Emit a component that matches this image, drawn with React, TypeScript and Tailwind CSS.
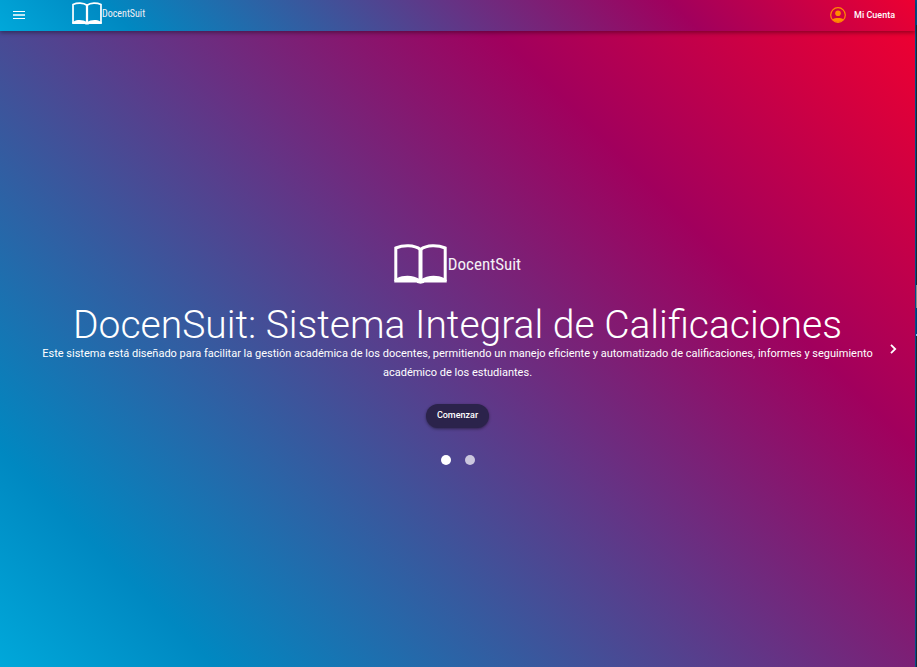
import React from "react";

const edge = [
  { h: "h-[25px]", c: "bg-[#004f8c]" },
  { h: "h-[260px]", c: "bg-[#1b2733]" },
  { h: "h-[23px]", c: "bg-[#8a8a8a]" },
  { h: "h-[26px]", c: "bg-[#003c78]" },
  { h: "h-[2px]", c: "bg-[#8fb8e8]" },
];

function Logo({ large = false }: { large?: boolean }) {
  return (
    <span className={`flex items-center text-[#f3f0f5] ${large ? "gap-px" : ""}`}>
      <svg
        viewBox="0 0 53 40"
        className={large ? "h-10 w-[53px]" : "h-[23px] w-[30px]"}
        fill="none"
        aria-hidden="true"
      >
        <path
          d="M1.800 37V4C9 1 20 .600 26.500 5.500C33 .600 44 1 51.200 4V37"
          stroke="white"
          strokeWidth="3"
        />
        <path d="M26.500 5V36" stroke="white" strokeWidth="4" />
        <path
          d="M.3 38.500V36L3 34C10 30.500 20 31 26.500 35.500C33 31 43 30.500 50 34L52.700 36V38.500H30.500C28.500 40 24.500 40 22.500 38.500Z"
          fill="white"
        />
      </svg>
      <span
        className={`font-['Liberation_Sans_Narrow','Roboto_Condensed',Roboto,sans-serif] ${
          large ? "text-[17px] leading-6" : "text-[10px] leading-3"
        }`}
      >
        DocentSuit
      </span>
    </span>
  );
}

export default function App() {
  return (
    <div className="flex min-h-screen bg-[#1b2733] font-[Roboto,sans-serif] text-white">
      <div className="flex min-w-0 flex-1 flex-col">
        <header className="z-10 flex h-[31px] items-center bg-[linear-gradient(45deg,#00a8da_0%,#0088c1_14%,#365a9f_34%,#663284_51%,#a1005d_74%,#ed0031_100%)] pr-5 pb-0.5 pl-[13px] shadow-[0_2px_4px_rgba(0,0,0,0.35)]">
          <button type="button" aria-label="Menú" className="flex h-6 w-3 items-center">
            <svg viewBox="0 0 12 8" className="h-2 w-3" aria-hidden="true">
              <path d="M0 0h12v1H0zM0 7h12v1H0z" fill="white" />
              <path d="M0 3h12v2H0z" fill="white" fillOpacity=".75" />
            </svg>
          </button>
          <a href="#inicio" className="mb-0.5 ml-[47px]">
            <Logo />
          </a>
          <button type="button" className="ml-auto flex items-center gap-2 text-[9px] leading-4 font-medium">
            <svg viewBox="0 0 16 16" className="size-4" aria-hidden="true">
              <circle cx="8" cy="8" r="7.300" fill="none" stroke="#ff8c00" strokeWidth="1.200" />
              <circle cx="8" cy="6.200" r="2.800" fill="#ff8c00" />
              <path d="M2.500 12.300C5 10.400 11 10.400 13.500 12.300C11 16 5 16 2.500 12.300Z" fill="#ff8c00" />
            </svg>
            Mi Cuenta
          </button>
        </header>
        <main className="grid flex-1 grid-cols-[40px_1fr_40px] items-center bg-[linear-gradient(45deg,#00a8da_0%,#0088c1_14%,#365a9f_34%,#663284_51%,#a1005d_73%,#ed0031_100%)]">
          <section className="col-start-2 flex flex-col items-center pt-[10px] text-center">
            <Logo large />
            <h1 className="mt-[22px] text-[39px] leading-[38px] font-light">
              DocenSuit: Sistema Integral de Calificaciones
            </h1>
            <p className="text-[11px] leading-[19px]">
              Este sistema está diseñado para facilitar la gestión académica de los docentes, permitiendo un manejo
              eficiente y automatizado de calificaciones, informes y seguimiento académico de los estudiantes.
            </p>
            <button
              type="button"
              className="mt-[22px] h-6 rounded-full bg-[#2b234b] px-[11px] text-[9px] font-medium shadow-[0_1px_3px_rgba(0,0,0,0.45)]"
            >
              Comenzar
            </button>
            <div className="mt-[27px] flex gap-[14px]">
              <button type="button" aria-label="Diapositiva 1" className="size-[10px] rounded-full bg-white" />
              <button type="button" aria-label="Diapositiva 2" className="size-[10px] rounded-full bg-white/70" />
            </div>
          </section>
          <button type="button" aria-label="Siguiente" className="flex h-6 w-9 items-center justify-center">
            <svg viewBox="0 0 8 10" className="h-[10px] w-2" fill="none" aria-hidden="true">
              <path d="M2 .800L6.200 5L2 9.200" stroke="white" strokeWidth="1.800" />
            </svg>
          </button>
        </main>
      </div>
      <div className="w-px shrink-0 bg-[#00508a]" />
      <div className="w-px shrink-0">
        {edge.map((part) => (
          <div key={part.c} className={`${part.h} ${part.c}`} />
        ))}
      </div>
    </div>
  );
}
